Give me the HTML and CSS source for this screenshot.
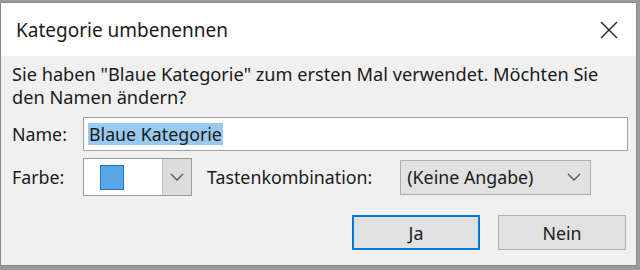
FILE: index.html
```html
<!DOCTYPE html>
<html lang="de">
<head>
  <meta charset="UTF-8">
  <title>Kategorie umbenennen</title>
  <link rel="stylesheet" href="styles.css">
</head>
<body>
  <div class="dialog">
    <div class="titlebar">
      <span class="title">Kategorie umbenennen</span>
      <svg class="close" width="18" height="18" viewBox="0 0 18 18">
        <path d="M1 1 L17 17 M17 1 L1 17" stroke="#222" stroke-width="1.4" fill="none"/>
      </svg>
    </div>

    <div class="content">
      <p class="message">Sie haben "Blaue Kategorie" zum ersten Mal verwendet. Möchten Sie den Namen ändern?</p>

      <div class="row">
        <label class="label">Name:</label>
        <div class="textbox"><span class="selected">Blaue Kategorie</span></div>
      </div>

      <div class="row">
        <label class="label">Farbe:</label>
        <div class="colorpick">
          <div class="swatch-area"><span class="swatch"></span></div>
          <div class="drop-btn">
            <svg width="14" height="8" viewBox="0 0 14 8"><path d="M1 1 L7 7 L13 1" stroke="#555" stroke-width="1.3" fill="none"/></svg>
          </div>
        </div>
        <label class="label shortcut-label">Tastenkombination:</label>
        <div class="select">
          <span>(Keine Angabe)</span>
          <svg width="14" height="8" viewBox="0 0 14 8"><path d="M1 1 L7 7 L13 1" stroke="#555" stroke-width="1.3" fill="none"/></svg>
        </div>
      </div>

      <div class="buttons">
        <button class="btn default">Ja</button>
        <button class="btn">Nein</button>
      </div>
    </div>
  </div>
</body>
</html>
```

FILE: styles.css
```css
body {
  margin: 0;
  background: #9a9a9a;
  font-family: "Noto Sans", "Open Sans", sans-serif;
  color: #1a1a1a;
  height: 270px;
  overflow: hidden;
}

.dialog {
  margin-top: 2px;
  width: 635px;
  height: 262px;
  border: 1px solid #8a8a8a;
  background: #f0f0f0;
  display: flex;
  flex-direction: column;
}

.titlebar {
  background: #fff;
  height: 53px;
  flex-shrink: 0;
  display: flex;
  align-items: center;
  justify-content: space-between;
  padding: 0 18px 0 15px;
}

.title {
  font-size: 19px;
  color: #1a1a1a;
}

.content {
  padding: 7px 8px 0 11px;
  font-size: 17.8px;
}

.message {
  margin: 0 0 8px;
  max-width: 612px;
  font-size: 18.2px;
  line-height: 23px;
}

.row {
  display: flex;
  align-items: center;
  margin-bottom: 7px;
}

.label {
  width: 71px;
}

.textbox {
  flex: 1;
  height: 32px;
  border: 1px solid #a0a0a0;
  background: #fff;
  display: flex;
  align-items: center;
  padding-left: 4px;
}

.selected {
  background: #99c9ef;
  padding: 0 1px;
  line-height: 22px;
}

.colorpick {
  width: 107px;
  height: 36px;
  border: 1px solid #9a9a9a;
  display: flex;
  background: #fff;
}

.swatch-area {
  flex: 1;
  display: flex;
  align-items: center;
  padding-left: 16px;
}

.swatch {
  width: 22px;
  height: 23px;
  background: #5aa6e8;
  border: 1px solid #1a7ad2;
}

.drop-btn {
  width: 28px;
  background: #dcdcdc;
  border-left: 1px solid #c4c4c4;
  display: flex;
  align-items: center;
  justify-content: center;
}

.shortcut-label {
  width: auto;
  margin: 0 28px 0 15px;
}

.select {
  width: 174px;
  height: 33px;
  border: 1px solid #adadad;
  background: #e1e1e1;
  display: flex;
  align-items: center;
  justify-content: space-between;
  padding: 0 9px 0 6px;
}

.buttons {
  display: flex;
  justify-content: flex-end;
  gap: 18px;
  margin-top: 19px;
  padding-right: 2px;
}

.btn {
  width: 128px;
  height: 35px;
  font-family: inherit;
  font-size: 17.8px;
  color: #1a1a1a;
  background: #e1e1e1;
  border: 1px solid #adadad;
}

.btn.default {
  border: 2px solid #0078d7;
}
```
